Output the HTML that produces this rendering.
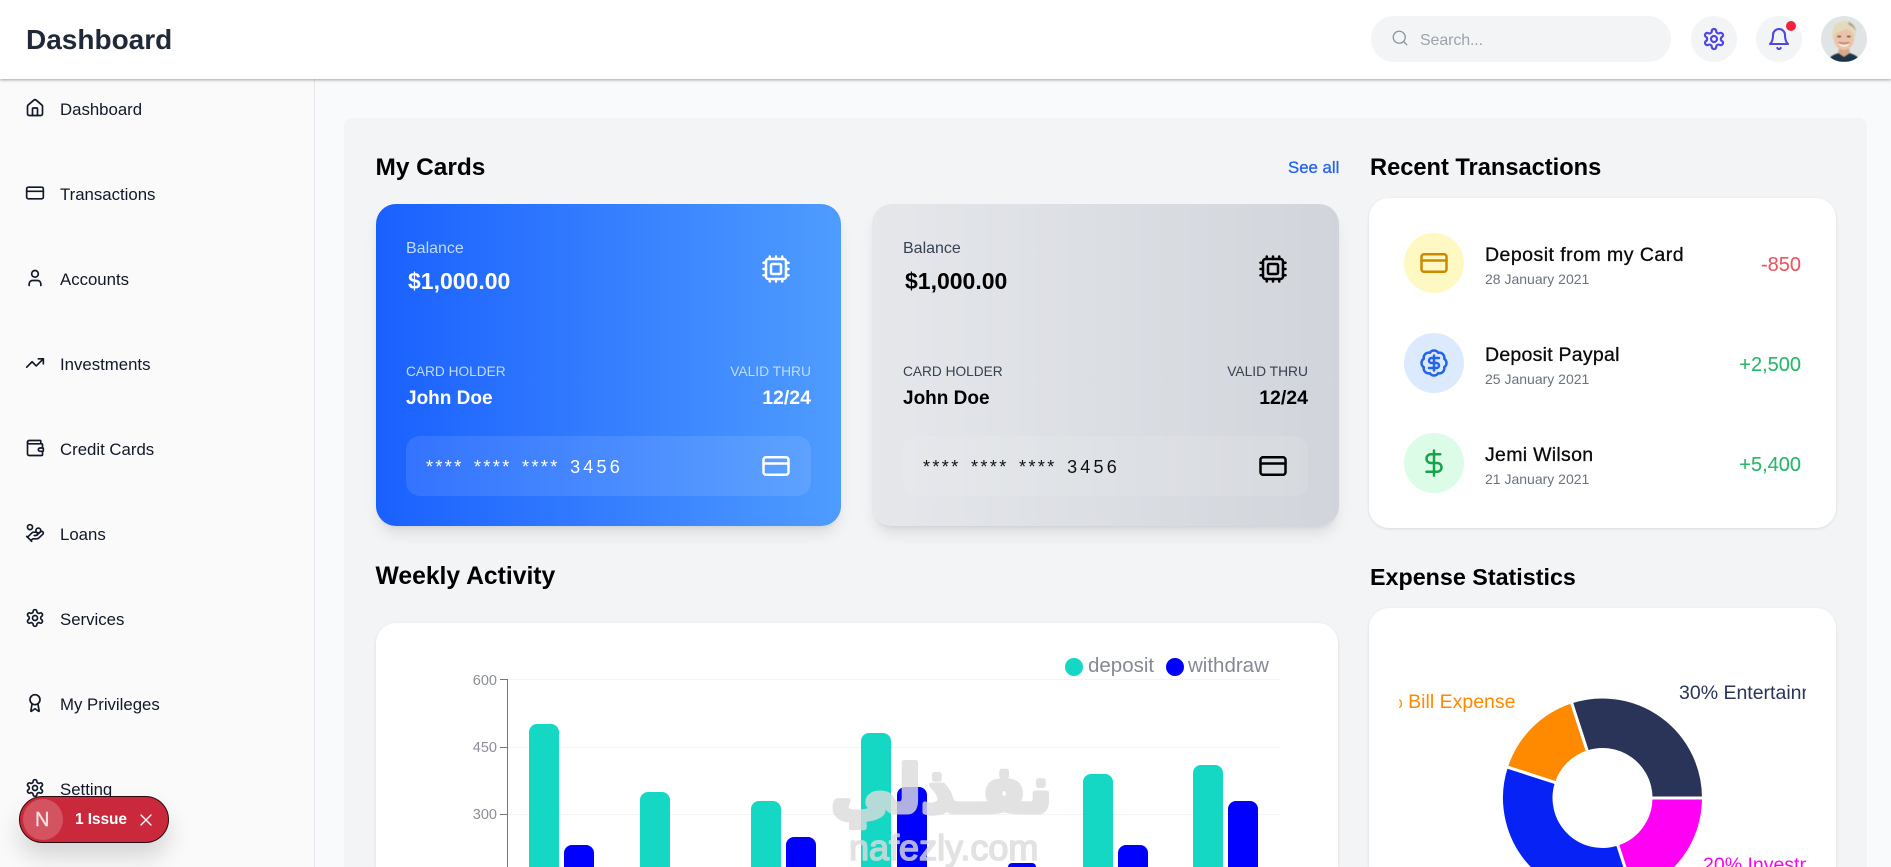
<!DOCTYPE html>
<html lang="en"><head><meta charset="utf-8"><title>Dashboard</title>
<style>
*{box-sizing:border-box;margin:0;padding:0}
html,body{width:1891px;height:867px;overflow:hidden;background:#f9fafb;font-family:"Liberation Sans",sans-serif}
#p{position:absolute;left:0;top:0;width:1891px;height:867px;overflow:hidden;background:#f9fafb}
.a{position:absolute}
.t{position:absolute;white-space:nowrap;line-height:20px;height:20px}
.r{text-align:right}
svg{display:block}
.i{position:absolute;fill:none;stroke:currentColor;stroke-width:2;stroke-linecap:round;stroke-linejoin:round}
.nav{font-size:16.8px;color:#111827;left:60px}
.h{font-size:24px;font-weight:700;color:#000}
.card{position:absolute;top:204px;height:322px;border-radius:20px}
.bar{position:absolute;border-radius:8px 8px 0 0;bottom:0}
.name{font-size:19.5px;color:#0a0a0a;left:1485px;letter-spacing:.38px;-webkit-text-stroke:.3px #0a0a0a}
.date{font-size:14px;color:#6b7280;left:1485px}
.amt{font-size:20px;right:90px;-webkit-text-stroke:.1px currentColor}
.circ{position:absolute;left:1404px;width:60px;height:60px;border-radius:50%}
.dg{letter-spacing:3.2px}
</style></head>
<body>
<div id="p">
<div class="a" style="left:0;top:79px;width:315px;height:788px;background:#fafafa;border-right:1px solid #e5e7eb"></div>
<div class="a" style="left:344px;top:118px;width:1523px;height:749px;background:#f3f4f6;border-radius:8px 8px 0 0"></div>

<!-- header -->
<div class="a" style="left:0;top:0;width:1891px;height:79px;background:#fff;box-shadow:0 1px 3px rgba(0,0,0,.35)"></div>
<div class="t" style="left:26px;top:30px;font-size:28px;font-weight:700;color:#1f2937">Dashboard</div>
<div class="a" style="left:1371px;top:16px;width:300px;height:46px;border-radius:23px;background:#f3f4f6"></div>
<svg class="i" style="left:1391px;top:29px;color:#8f95a0;stroke-width:1.8" width="18" height="18" viewBox="0 0 24 24"><circle cx="11" cy="11" r="8"/><path d="m21 21-4.3-4.3"/></svg>
<div class="t" style="left:1420px;top:30px;margin-top:.5px;font-size:16px;color:#9ca3af;letter-spacing:-.12px">Search...</div>
<div class="a" style="left:1691px;top:16px;width:46px;height:46px;border-radius:50%;background:#f3f4f6"></div>
<svg class="i" style="left:1702px;top:27px;color:#4f46e5;stroke-width:2.2" width="24" height="24" viewBox="0 0 24 24"><path d="M12.22 2h-.44a2 2 0 0 0-2 2v.18a2 2 0 0 1-1 1.73l-.43.25a2 2 0 0 1-2 0l-.15-.08a2 2 0 0 0-2.73.73l-.22.38a2 2 0 0 0 .73 2.73l.15.1a2 2 0 0 1 1 1.72v.51a2 2 0 0 1-1 1.74l-.15.09a2 2 0 0 0-.73 2.73l.22.38a2 2 0 0 0 2.73.73l.15-.08a2 2 0 0 1 2 0l.43.25a2 2 0 0 1 1 1.73V20a2 2 0 0 0 2 2h.44a2 2 0 0 0 2-2v-.18a2 2 0 0 1 1-1.73l.43-.25a2 2 0 0 1 2 0l.15.08a2 2 0 0 0 2.73-.73l.22-.39a2 2 0 0 0-.73-2.73l-.15-.08a2 2 0 0 1-1-1.74v-.5a2 2 0 0 1 1-1.74l.15-.09a2 2 0 0 0 .73-2.73l-.22-.38a2 2 0 0 0-2.73-.73l-.15.08a2 2 0 0 1-2 0l-.43-.25a2 2 0 0 1-1-1.73V4a2 2 0 0 0-2-2z"/><circle cx="12" cy="12" r="3"/></svg>
<div class="a" style="left:1756px;top:16px;width:46px;height:46px;border-radius:50%;background:#f3f4f6"></div>
<svg class="i" style="left:1767px;top:27px;color:#4f46e5;stroke-width:2.1" width="24" height="24" viewBox="0 0 24 24"><path d="M6 8a6 6 0 0 1 12 0c0 7 3 9 3 9H3s3-2 3-9"/><path d="M10.3 21a1.94 1.94 0 0 0 3.4 0"/></svg>
<div class="a" style="left:1786px;top:21px;width:10px;height:10px;border-radius:50%;background:#ef233c"></div>
<svg class="a" style="left:1821px;top:16px" width="46" height="46" viewBox="0 0 46 46"><defs><clipPath id="av"><circle cx="23" cy="23" r="23"/></clipPath></defs><g clip-path="url(#av)"><rect width="46" height="46" fill="#e0e4e4"/><g style="filter:blur(.5px)"><path d="M7 46c1-6 7-8 11-9l5 3 5-3c4 1 10 3 11 9z" fill="#1d3347"/><path d="M18 32h10l1 5-6 4-6-4z" fill="#d7a78c"/><ellipse cx="23" cy="23" rx="10" ry="11" fill="#eac3a8"/><path d="M12 24C9 12 15 5 24 5c8 0 12 5 11 14l-2 4c-1-6-3-9-7-11-3 3-8 4-11 5-1 2-2 5-3 7z" fill="#e2dabb"/><path d="M27 6c4 1 7 4 8 9-2-3-4-5-7-6z" fill="#a8a08a"/><path d="M17.500 26.500c3 4 8 4 11 0-1 5.500-10 5.500-11 0z" fill="#fff"/><path d="M17.500 26.500c3 1 8 1 11 0" stroke="#9c4a3e" stroke-width=".7" fill="none"/><path d="M16.500 20.500h3.500M26 20.500h3.500" stroke="#4a3a30" stroke-width="1.3"/></g></g></svg>

<!-- sidebar -->
<svg class="i" style="left:25px;top:98px;color:#111827" width="20" height="20" viewBox="0 0 24 24"><path d="M15 21v-8a1 1 0 0 0-1-1h-4a1 1 0 0 0-1 1v8"/><path d="M3 10a2 2 0 0 1 .709-1.528l7-5.999a2 2 0 0 1 2.582 0l7 5.999A2 2 0 0 1 21 10v9a2 2 0 0 1-2 2H5a2 2 0 0 1-2-2z"/></svg>
<div class="t nav" style="top:100px">Dashboard</div>
<svg class="i" style="left:25px;top:183px;color:#111827" width="20" height="20" viewBox="0 0 24 24"><rect x="2" y="5" width="20" height="14" rx="2"/><line x1="2" y1="10" x2="22" y2="10"/></svg>
<div class="t nav" style="top:185px">Transactions</div>
<svg class="i" style="left:25px;top:268px;color:#111827" width="20" height="20" viewBox="0 0 24 24"><path d="M19 21v-2a4 4 0 0 0-4-4H9a4 4 0 0 0-4 4v2"/><circle cx="12" cy="7" r="4"/></svg>
<div class="t nav" style="top:270px">Accounts</div>
<svg class="i" style="left:25px;top:353px;color:#111827" width="20" height="20" viewBox="0 0 24 24"><polyline points="22 7 13.5 15.500 8.500 10.500 2 17"/><polyline points="16 7 22 7 22 13"/></svg>
<div class="t nav" style="top:355px">Investments</div>
<svg class="i" style="left:25px;top:438px;color:#111827" width="20" height="20" viewBox="0 0 24 24"><path d="M19 7V4a1 1 0 0 0-1-1H5a2 2 0 0 0 0 4h15a1 1 0 0 1 1 1v4h-3a2 2 0 0 0 0 4h3a1 1 0 0 0 1-1v-2a1 1 0 0 0-1-1"/><path d="M3 5v14a2 2 0 0 0 2 2h15a1 1 0 0 0 1-1v-4"/></svg>
<div class="t nav" style="top:440px">Credit Cards</div>
<svg class="i" style="left:25px;top:523px;color:#111827" width="20" height="20" viewBox="0 0 24 24"><path d="M11 15h2a2 2 0 1 0 0-4h-3c-.6 0-1.100.2-1.400.6L3 17"/><path d="m7 21 1.600-1.400c.3-.4.8-.6 1.400-.6h4c1.100 0 2.100-.4 2.800-1.200l4.600-4.400a2 2 0 0 0-2.750-2.910l-4.200 3.900"/><path d="m2 16 6 6"/><circle cx="16" cy="9" r="2.900"/><circle cx="6" cy="5" r="3"/></svg>
<div class="t nav" style="top:525px">Loans</div>
<svg class="i" style="left:25px;top:608px;color:#111827" width="20" height="20" viewBox="0 0 24 24"><path d="M12.22 2h-.44a2 2 0 0 0-2 2v.18a2 2 0 0 1-1 1.73l-.43.25a2 2 0 0 1-2 0l-.15-.08a2 2 0 0 0-2.73.73l-.22.38a2 2 0 0 0 .73 2.73l.15.1a2 2 0 0 1 1 1.72v.51a2 2 0 0 1-1 1.74l-.15.09a2 2 0 0 0-.73 2.73l.22.38a2 2 0 0 0 2.73.73l.15-.08a2 2 0 0 1 2 0l.43.25a2 2 0 0 1 1 1.73V20a2 2 0 0 0 2 2h.44a2 2 0 0 0 2-2v-.18a2 2 0 0 1 1-1.73l.43-.25a2 2 0 0 1 2 0l.15.08a2 2 0 0 0 2.73-.73l.22-.39a2 2 0 0 0-.73-2.73l-.15-.08a2 2 0 0 1-1-1.74v-.5a2 2 0 0 1 1-1.74l.15-.09a2 2 0 0 0 .73-2.73l-.22-.38a2 2 0 0 0-2.73-.73l-.15.08a2 2 0 0 1-2 0l-.43-.25a2 2 0 0 1-1-1.73V4a2 2 0 0 0-2-2z"/><circle cx="12" cy="12" r="3"/></svg>
<div class="t nav" style="top:610px">Services</div>
<svg class="i" style="left:25px;top:693px;color:#111827" width="20" height="20" viewBox="0 0 24 24"><path d="m15.477 12.890 1.515 8.526a.5.5 0 0 1-.81.47l-3.580-2.687a1 1 0 0 0-1.197 0l-3.586 2.686a.5.5 0 0 1-.81-.469l1.514-8.526"/><circle cx="12" cy="8" r="6"/></svg>
<div class="t nav" style="top:695px">My Privileges</div>
<svg class="i" style="left:25px;top:778px;color:#111827" width="20" height="20" viewBox="0 0 24 24"><path d="M12.22 2h-.44a2 2 0 0 0-2 2v.18a2 2 0 0 1-1 1.73l-.43.25a2 2 0 0 1-2 0l-.15-.08a2 2 0 0 0-2.73.73l-.22.38a2 2 0 0 0 .73 2.73l.15.1a2 2 0 0 1 1 1.72v.51a2 2 0 0 1-1 1.74l-.15.09a2 2 0 0 0-.73 2.73l.22.38a2 2 0 0 0 2.73.73l.15-.08a2 2 0 0 1 2 0l.43.25a2 2 0 0 1 1 1.73V20a2 2 0 0 0 2 2h.44a2 2 0 0 0 2-2v-.18a2 2 0 0 1 1-1.73l.43-.25a2 2 0 0 1 2 0l.15.08a2 2 0 0 0 2.73-.73l.22-.39a2 2 0 0 0-.73-2.73l-.15-.08a2 2 0 0 1-1-1.74v-.5a2 2 0 0 1 1-1.74l.15-.09a2 2 0 0 0 .73-2.73l-.22-.38a2 2 0 0 0-2.73-.73l-.15.08a2 2 0 0 1-2 0l-.43-.25a2 2 0 0 1-1-1.73V4a2 2 0 0 0-2-2z"/><circle cx="12" cy="12" r="3"/></svg>
<div class="t nav" style="top:780px">Setting</div>

<!-- section titles -->
<div class="t h" style="left:375.500px;top:158px;font-size:24.400px">My Cards</div>
<div class="t" style="left:1288px;top:157.500px;font-size:16.800px;color:#2563eb;-webkit-text-stroke:.3px #2563eb">See all</div>
<div class="t h" style="left:1370px;top:158px;font-size:23.650px">Recent Transactions</div>
<div class="t h" style="left:375.500px;top:567px;font-size:24.700px">Weekly Activity</div>
<div class="t h" style="left:1370px;top:567px;font-size:23.300px">Expense Statistics</div>

<!-- blue card -->
<div class="card" style="left:376px;width:465px;background:linear-gradient(90deg,#1a60ff,#4f9cff);box-shadow:0 10px 15px -3px rgba(0,0,0,.1),0 4px 6px -4px rgba(0,0,0,.1)"></div>
<div class="t" style="left:406px;top:239px;font-size:16px;color:#bfdbfe">Balance</div>
<div class="t" style="left:408px;top:271px;font-size:23px;font-weight:700;color:#fff">$1,000.00</div>
<svg class="i" style="left:761px;top:254px;color:#fff" width="30" height="30" viewBox="0 0 24 24"><path d="M12 20v2M12 2v2M17 20v2M17 2v2M2 12h2M2 17h2M2 7h2M20 12h2M20 17h2M20 7h2M7 20v2M7 2v2"/><rect x="4" y="4" width="16" height="16" rx="2"/><rect x="8" y="8" width="8" height="8" rx="1"/></svg>
<div class="t" style="left:406px;top:362px;font-size:13.700px;color:#bfdbfe">CARD HOLDER</div>
<div class="t" style="left:406px;top:389px;font-size:19px;font-weight:700;color:#fff">John Doe</div>
<div class="t r" style="right:1080px;top:362px;font-size:13.800px;color:#bfdbfe">VALID THRU</div>
<div class="t r" style="right:1080px;top:388px;font-size:19.500px;font-weight:700;color:#fff">12/24</div>
<div class="a" style="left:406px;top:436px;width:405px;height:60px;border-radius:14px;background:rgba(255,255,255,.1)"></div>
<div class="t" style="left:426px;top:457px;font-size:18px;color:#fff;letter-spacing:2.400px;word-spacing:3px">**** **** **** <span class="dg">3456</span></div>
<svg class="i" style="left:761px;top:451px;color:#fff" width="30" height="30" viewBox="0 0 24 24"><rect x="2" y="5" width="20" height="14" rx="2"/><line x1="2" y1="10" x2="22" y2="10"/></svg>

<!-- gray card -->
<div class="card" style="left:872px;width:467px;background:linear-gradient(90deg,#e5e7eb,#d1d5db);box-shadow:0 10px 15px -3px rgba(0,0,0,.1),0 4px 6px -4px rgba(0,0,0,.1)"></div>
<div class="t" style="left:903px;top:239px;font-size:16px;color:#374151">Balance</div>
<div class="t" style="left:905px;top:271px;font-size:23px;font-weight:700;color:#000">$1,000.00</div>
<svg class="i" style="left:1258px;top:254px;color:#000" width="30" height="30" viewBox="0 0 24 24"><path d="M12 20v2M12 2v2M17 20v2M17 2v2M2 12h2M2 17h2M2 7h2M20 12h2M20 17h2M20 7h2M7 20v2M7 2v2"/><rect x="4" y="4" width="16" height="16" rx="2"/><rect x="8" y="8" width="8" height="8" rx="1"/></svg>
<div class="t" style="left:903px;top:362px;font-size:13.700px;color:#374151">CARD HOLDER</div>
<div class="t" style="left:903px;top:389px;font-size:19px;font-weight:700;color:#000">John Doe</div>
<div class="t r" style="right:583px;top:362px;font-size:13.800px;color:#374151">VALID THRU</div>
<div class="t r" style="right:583px;top:388px;font-size:19.500px;font-weight:700;color:#000">12/24</div>
<div class="a" style="left:903px;top:436px;width:405px;height:60px;border-radius:14px;background:rgba(255,255,255,.1)"></div>
<div class="t" style="left:923px;top:457px;font-size:18px;color:#111;letter-spacing:2.400px;word-spacing:3px">**** **** **** <span class="dg">3456</span></div>
<svg class="i" style="left:1258px;top:451px;color:#000" width="30" height="30" viewBox="0 0 24 24"><rect x="2" y="5" width="20" height="14" rx="2"/><line x1="2" y1="10" x2="22" y2="10"/></svg>

<!-- transactions -->
<div class="a" style="left:1369px;top:198px;width:467px;height:330px;border-radius:20px;background:#fff;box-shadow:0 1px 3px rgba(0,0,0,.1)"></div>
<div class="circ" style="top:233px;background:#fef9c3"></div>
<svg class="i" style="left:1419px;top:248px;color:#ca8a04" width="30" height="30" viewBox="0 0 24 24"><rect x="2" y="5" width="20" height="14" rx="2"/><line x1="2" y1="10" x2="22" y2="10"/></svg>
<div class="t name" style="top:245px;letter-spacing:.47px">Deposit from my Card</div>
<div class="t date" style="top:269px">28 January 2021</div>
<div class="t amt r" style="top:255px;color:#ee5561">-850</div>
<div class="circ" style="top:333px;background:#dbeafe"></div>
<svg class="i" style="left:1419px;top:348px;color:#2563eb" width="30" height="30" viewBox="0 0 24 24"><path d="M3.850 8.620a4 4 0 0 1 4.780-4.770 4 4 0 0 1 6.740 0 4 4 0 0 1 4.780 4.780 4 4 0 0 1 0 6.740 4 4 0 0 1-4.770 4.780 4 4 0 0 1-6.750 0 4 4 0 0 1-4.780-4.770 4 4 0 0 1 0-6.760Z"/><path d="M16 8h-6a2 2 0 1 0 0 4h4a2 2 0 1 1 0 4H8"/><path d="M12 18V6"/></svg>
<div class="t name" style="top:345px;letter-spacing:.25px">Deposit Paypal</div>
<div class="t date" style="top:369px">25 January 2021</div>
<div class="t amt r" style="top:355px;color:#27b86c">+2,500</div>
<div class="circ" style="top:433px;background:#dcfce7"></div>
<svg class="i" style="left:1419px;top:448px;color:#16a34a" width="30" height="30" viewBox="0 0 24 24"><line x1="12" y1="2" x2="12" y2="22"/><path d="M17 5H9.500a3.500 3.500 0 0 0 0 7h5a3.500 3.500 0 0 1 0 7H6"/></svg>
<div class="t name" style="top:445px;letter-spacing:.3px">Jemi Wilson</div>
<div class="t date" style="top:469px">21 January 2021</div>
<div class="t amt r" style="top:455px;color:#27b86c">+5,400</div>

<!-- weekly chart -->
<div class="a" style="left:376px;top:623px;width:962px;height:244px;border-radius:20px 20px 0 0;background:#fff;box-shadow:0 1px 3px rgba(0,0,0,.1)"></div>
<div class="a" style="left:507px;top:679px;width:773px;height:1px;background:#f3f4f6"></div>
<div class="a" style="left:507px;top:747px;width:773px;height:1px;background:#f3f4f6"></div>
<div class="a" style="left:507px;top:814px;width:773px;height:1px;background:#f3f4f6"></div>
<div class="a" style="left:507px;top:679px;width:1px;height:188px;background:#777"></div>
<div class="a" style="left:500px;top:679px;width:7px;height:1px;background:#777"></div>
<div class="a" style="left:500px;top:747px;width:7px;height:1px;background:#777"></div>
<div class="a" style="left:500px;top:814px;width:7px;height:1px;background:#777"></div>
<div class="t r" style="right:1394px;top:671px;font-size:14.500px;color:#8c8f99">600</div>
<div class="t r" style="right:1394px;top:738px;font-size:14.500px;color:#8c8f99">450</div>
<div class="t r" style="right:1394px;top:805px;font-size:14.500px;color:#8c8f99">300</div>
<div class="a" style="left:0;top:0;width:1891px;height:867px">
<div class="bar" style="left:529px;top:724px;width:30px;background:#14d8c4"></div>
<div class="bar" style="left:564px;top:845px;width:30px;background:#0000ff"></div>
<div class="bar" style="left:640px;top:792px;width:30px;background:#14d8c4"></div>
<div class="bar" style="left:751px;top:801px;width:30px;background:#14d8c4"></div>
<div class="bar" style="left:786px;top:837px;width:30px;background:#0000ff"></div>
<div class="bar" style="left:861px;top:733px;width:30px;background:#14d8c4"></div>
<div class="bar" style="left:897px;top:787px;width:30px;background:#0000ff"></div>
<div class="bar" style="left:1008px;top:863px;width:28px;background:#0000ff"></div>
<div class="bar" style="left:1083px;top:774px;width:30px;background:#14d8c4"></div>
<div class="bar" style="left:1118px;top:845px;width:30px;background:#0000ff"></div>
<div class="bar" style="left:1193px;top:765px;width:30px;background:#14d8c4"></div>
<div class="bar" style="left:1228px;top:801px;width:30px;background:#0000ff"></div>
</div>
<div class="a" style="left:1065px;top:658px;width:18px;height:18px;border-radius:50%;background:#14d8c4"></div>
<div class="t" style="left:1088px;top:656px;font-size:20.500px;color:#858995">deposit</div>
<div class="a" style="left:1166px;top:658px;width:18px;height:18px;border-radius:50%;background:#0000ff"></div>
<div class="t" style="left:1188px;top:656px;font-size:20.500px;color:#858995">withdraw</div>

<!-- expense -->
<div class="a" style="left:1369px;top:608px;width:467px;height:259px;border-radius:20px 20px 0 0;background:#fff;box-shadow:0 1px 3px rgba(0,0,0,.1)"></div>
<svg class="a" style="left:1399px;top:660px" width="407" height="207" viewBox="1399 660 407 207">
<g transform="translate(1602.500 798)" stroke="#fff" stroke-width="3">
<path fill="#2a3459" d="M101 0A101 101 0 0 0 -31.210 -96.060L-14.990 -46.130A48.500 48.500 0 0 1 48.500 0Z"/>
<path fill="#ff8a00" d="M-31.210 -96.060A101 101 0 0 0 -96.060 -31.210L-46.130 -14.990A48.500 48.500 0 0 1 -14.990 -46.130Z"/>
<path fill="#0722f5" d="M-96.060 -31.210A101 101 0 0 0 31.210 96.060L14.990 46.130A48.500 48.500 0 0 1 -46.130 -14.990Z"/>
<path fill="#ff00f5" d="M31.210 96.060A101 101 0 0 0 101 0L48.500 0A48.500 48.500 0 0 1 14.990 46.130Z"/>
</g>
<text x="1515.500" y="708" text-anchor="end" font-family="Liberation Sans" font-size="19.500" fill="#ff8a00">15% Bill Expense</text>
<text x="1679" y="699" font-family="Liberation Sans" font-size="19.500" fill="#2a3459">30% Entertainment</text>
<text x="1703" y="871" font-family="Liberation Sans" font-size="19.500" fill="#ff00f5">20% Investment</text>
</svg>

<!-- issue pill -->
<div class="a" style="left:19px;top:796px;width:150px;height:47px;border-radius:24px;background:#c9293a;border:1px solid #2a0a10;box-shadow:0 14px 24px rgba(0,0,0,.15)"></div>
<div class="a" style="left:23px;top:799px;width:40px;height:41px;border-radius:50%;background:rgba(255,255,255,.2)"></div>
<div class="t" style="left:35px;top:810px;font-size:20px;color:#f7dfe1;-webkit-text-stroke:.4px #f7dfe1">N</div>
<div class="t" style="left:75px;top:810px;font-size:15.500px;font-weight:700;color:#fff;letter-spacing:-.1px">1 Issue</div>
<svg class="i" style="left:140px;top:814px;color:#fff;stroke-width:1.400" width="12" height="12" viewBox="0 0 12 12"><path d="M1 1l10 10M11 1L1 11"/></svg>

<!-- watermark -->
<svg class="a" style="left:830px;top:750px;opacity:.8" width="235" height="117" viewBox="830 750 235 117">
<text x="1052" y="812" direction="rtl" text-anchor="start" font-family="'DejaVu Sans',sans-serif" font-weight="700" font-size="65" fill="#dcdcdc" stroke="#dcdcdc" stroke-width="5" stroke-linejoin="round">نفـذلي</text>
<text x="849" y="860" font-family="'Liberation Sans',sans-serif" font-size="36" fill="#dcdcdc" stroke="#dcdcdc" stroke-width="1.600" stroke-linejoin="round">nafezly.com</text>
</svg>
</div>
</body></html>
